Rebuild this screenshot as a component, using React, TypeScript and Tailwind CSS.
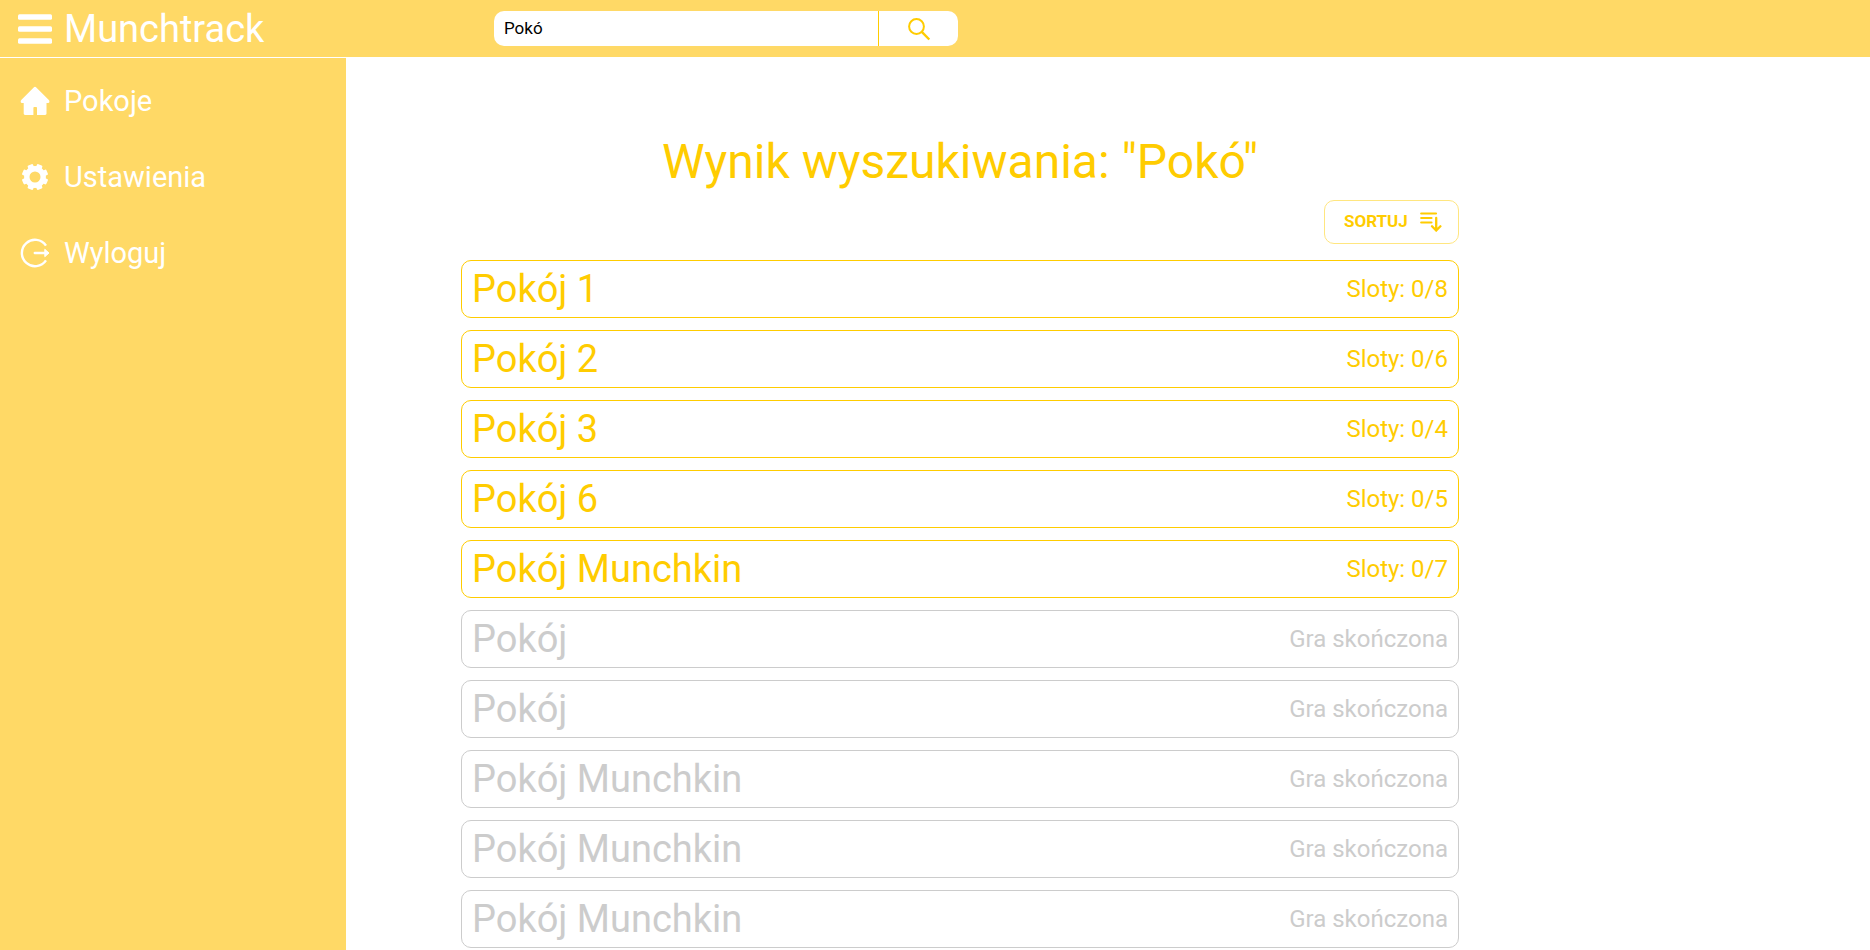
import React from "react";

type Room = { id: number; name: string; status: string; finished?: boolean };

const rooms: Room[] = [
  { id: 1, name: "Pokój 1", status: "Sloty: 0/8" },
  { id: 2, name: "Pokój 2", status: "Sloty: 0/6" },
  { id: 3, name: "Pokój 3", status: "Sloty: 0/4" },
  { id: 4, name: "Pokój 6", status: "Sloty: 0/5" },
  { id: 5, name: "Pokój Munchkin", status: "Sloty: 0/7" },
  { id: 6, name: "Pokój", status: "Gra skończona", finished: true },
  { id: 7, name: "Pokój", status: "Gra skończona", finished: true },
  { id: 8, name: "Pokój Munchkin", status: "Gra skończona", finished: true },
  { id: 9, name: "Pokój Munchkin", status: "Gra skończona", finished: true },
  { id: 10, name: "Pokój Munchkin", status: "Gra skończona", finished: true },
];

function MenuIcon() {
  return (
    <svg width="34" height="30" viewBox="0 0 34 30" fill="currentColor" aria-hidden="true">
      <rect y="0.300" width="34" height="5.400" rx="1.500" />
      <rect y="12.300" width="34" height="5.400" rx="1.500" />
      <rect y="24.300" width="34" height="5.400" rx="1.500" />
    </svg>
  );
}

function HomeIcon() {
  return (
    <svg className="mb-0.5" width="30" height="30" viewBox="0 0 30 30" fill="currentColor" aria-hidden="true">
      <path d="M15 .8c.5 0 .9.2 1.3.6l12.300 12.400c.7.7 1 1.500.8 2.200-.2.7-.8 1-1.600 1h-1.300v10.600c0 .9-.5 1.400-1.400 1.400H17v-7.200c0-.5-.3-.8-.8-.8h-2c-.5 0-.8.3-.8.800v7.200H5.100c-.9 0-1.400-.5-1.400-1.400V17H2.300c-.8 0-1.400-.3-1.600-1-.2-.7.1-1.500.8-2.200L13.700 1.400c.4-.4.800-.6 1.300-.6z" />
    </svg>
  );
}

function GearIcon() {
  const teeth = [22.5, 67.5, 112.5, 157.5, 202.5, 247.5, 292.5, 337.5];
  return (
    <svg className="mb-0.5" width="30" height="30" viewBox="0 0 30 30" fill="currentColor" aria-hidden="true">
      <circle cx="15" cy="15" r="8.200" fill="none" stroke="currentColor" strokeWidth="5.400" />
      {teeth.map((angle) => (
        <rect key={angle} x="12.100" y="1.800" width="5.800" height="5" rx="1.200" transform={`rotate(${angle} 15 15)`} />
      ))}
    </svg>
  );
}

function LogoutIcon() {
  return (
    <svg className="mb-0.5" width="30" height="30" viewBox="0 0 30 30" fill="none" stroke="currentColor" strokeWidth="2.400" aria-hidden="true">
      <path d="M26 7.600A13.200 13.200 0 1 0 26 22.400" />
      <path d="M14.800 15H25" strokeLinecap="round" />
      <path d="M24.800 11.300 29 15l-4.200 3.700z" fill="currentColor" strokeWidth="1" strokeLinejoin="round" />
    </svg>
  );
}

function SearchIcon() {
  return (
    <svg width="24" height="24" viewBox="0 0 24 24" fill="none" stroke="currentColor" strokeWidth="2" aria-hidden="true">
      <circle cx="9.500" cy="9.500" r="7.400" />
      <path d="M14.800 14.800 22.300 22.500" strokeWidth="2.400" />
    </svg>
  );
}

function SortIcon() {
  return (
    <svg width="22" height="20" viewBox="0 0 22 20" fill="none" stroke="currentColor" strokeWidth="2.200" strokeLinecap="round" aria-hidden="true">
      <path d="M1.200 1.500h14.800M1.200 6h10.300M1.200 10.500h10.300" />
      <path d="M16.200 6v12M12 14.300l4.200 4.200 4.200-4.200" strokeWidth="2.300" />
    </svg>
  );
}

const links = [
  { label: "Pokoje", icon: <HomeIcon /> },
  { label: "Ustawienia", icon: <GearIcon /> },
  { label: "Wyloguj", icon: <LogoutIcon /> },
];

export default function App() {
  return (
    <div className="flex min-h-screen flex-col bg-white font-[Roboto,sans-serif]">
      <header className="flex h-[57px] items-center bg-[#ffd966]">
        <div className="flex w-[494px] shrink-0 items-center gap-3 pl-[18px] text-white">
          <button type="button" aria-label="Menu">
            <MenuIcon />
          </button>
          <a href="#" className="text-[38px] leading-none">Munchtrack</a>
        </div>
        <form className="flex h-[35px] w-[464px] overflow-hidden rounded-[10px] bg-white" onSubmit={(e) => e.preventDefault()}>
          <input
            type="text"
            aria-label="Szukaj pokoju"
            defaultValue="Pokó"
            className="min-w-0 flex-1 px-[10px] text-[17px] text-black outline-none"
          />
          <button type="submit" aria-label="Szukaj" className="flex w-20 items-center justify-center border-l border-[#ffcc00] text-[#ffcc00]">
            <SearchIcon />
          </button>
        </form>
      </header>
      <div className="flex flex-1">
        <nav className="flex w-[346px] shrink-0 flex-col gap-9 border-t border-white bg-[#ffd966] pt-6 pl-5 text-white">
          {links.map((link) => (
            <a key={link.label} href="#" className="flex h-10 items-center gap-[14px] text-[29px]">
              {link.icon}
              {link.label}
            </a>
          ))}
        </nav>
        <main className="flex min-w-0 flex-1 flex-col pt-[77px] pr-[411px] pl-[115px] text-[#ffcc00]">
          <h1 className="text-center text-[48px] leading-[56px]">Wynik wyszukiwania: "Pokó"</h1>
          <button
            type="button"
            className="mt-[10px] flex h-11 w-[135px] items-center justify-between self-end rounded-[10px] border border-[#ffe680] pr-4 pl-[19px] text-[17px] font-bold"
          >
            SORTUJ
            <SortIcon />
          </button>
          <ul className="mt-4 flex flex-col gap-3">
            {rooms.map((room) => (
              <li key={room.id}>
                <a
                  href="#"
                  className={`flex h-[58px] items-center justify-between rounded-[10px] border px-[10px] ${
                    room.finished ? "border-[#cccccc] text-[#cccccc]" : "border-[#ffcc00]"
                  }`}
                >
                  <span className="text-[38px] leading-none">{room.name}</span>
                  <span className="text-2xl">{room.status}</span>
                </a>
              </li>
            ))}
          </ul>
        </main>
      </div>
    </div>
  );
}
